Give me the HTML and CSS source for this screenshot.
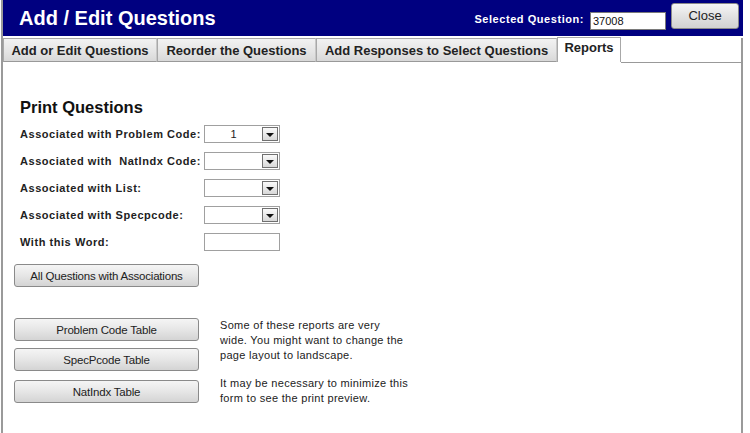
FILE: index.html
```html
<!DOCTYPE html>
<html>
<head>
<meta charset="utf-8">
<link rel="stylesheet" href="styles.css">
</head>
<body>
<div class="app">
  <header class="header">
    <h1 class="title">Add / Edit Questions</h1>
    <div class="selected">
      <span class="sel-label">Selected Question:</span>
      <span class="sel-input">37008</span>
      <span class="close-btn">Close</span>
    </div>
  </header>
  <nav class="tabs">
    <span class="tab t1">Add or Edit Questions</span>
    <span class="tab t2">Reorder the Questions</span>
    <span class="tab t3">Add Responses to Select Questions</span>
    <span class="tab active">Reports</span>
    <span class="tab-fill"></span>
  </nav>
  <main class="panel">
    <h2 class="section-title">Print Questions</h2>
    <div class="form">
      <div class="row">
        <span class="label">Associated with Problem Code:</span>
        <span class="combo"><span class="combo-val">1</span><span class="combo-btn"><span class="arrow"></span></span></span>
      </div>
      <div class="row">
        <span class="label">Associated with &nbsp;NatIndx Code:</span>
        <span class="combo"><span class="combo-val"></span><span class="combo-btn"><span class="arrow"></span></span></span>
      </div>
      <div class="row">
        <span class="label">Associated with List:</span>
        <span class="combo"><span class="combo-val"></span><span class="combo-btn"><span class="arrow"></span></span></span>
      </div>
      <div class="row">
        <span class="label">Associated with Specpcode:</span>
        <span class="combo"><span class="combo-val"></span><span class="combo-btn"><span class="arrow"></span></span></span>
      </div>
      <div class="row">
        <span class="label">With this Word:</span>
        <span class="textbox"></span>
      </div>
    </div>
    <div class="btn all-btn">All Questions with Associations</div>
    <div class="reports">
      <div class="btn-col">
        <div class="btn">Problem Code Table</div>
        <div class="btn b2">SpecPcode Table</div>
        <div class="btn b3">NatIndx Table</div>
      </div>
      <div class="notes">
        <p>Some of these reports are very<br>wide. You might want to change the<br>page layout to landscape.</p>
        <p>It may be necessary to minimize this<br>form to see the print preview.</p>
      </div>
    </div>
  </main>
</div>
</body>
</html>
```
FILE: styles.css
```css
* { box-sizing: border-box; }
html, body { margin: 0; padding: 0; background: #fff; }
body { font-family: "Liberation Sans", Arial, sans-serif; color: #222; }
.app {
  width: 742px;
  height: 433px;
  margin-left: 1px;
  border-left: 2px solid #9a9a9a;
  display: flex;
  flex-direction: column;
}
.header {
  height: 36px;
  background: #000080;
  display: flex;
  align-items: center;
  padding-left: 16px;
  flex: none;
}
.title {
  margin: 0;
  color: #fff;
  font-size: 20px;
  font-weight: bold;
}
.selected {
  margin-left: auto;
  display: flex;
  align-items: center;
}
.sel-label {
  color: #fff;
  font-size: 11px;
  font-weight: bold;
  letter-spacing: 0.55px;
  margin-right: 6px;
  margin-top: 2px;
}
.sel-input {
  width: 76px;
  height: 18px;
  background: #fff;
  border: 1px solid #7a7a7a;
  font-size: 11px;
  color: #111;
  padding: 2px 2px;
  line-height: 13px;
  margin-top: 6px;
}
.close-btn {
  width: 68px;
  height: 26px;
  margin-left: 5px;
  margin-right: 4px;
  margin-top: -4px;
  border: 1px solid #8a8a8a;
  border-radius: 3px;
  background: linear-gradient(#f6f6f6, #e2e2e2 50%, #d2d2d2);
  font-size: 13px;
  color: #222;
  display: flex;
  align-items: center;
  justify-content: center;
  padding-bottom: 2px;
}
.tabs {
  display: flex;
  margin-top: 2px;
  height: 25px;
  flex: none;
}
.tab {
  height: 24px;
  border: 1px solid #a8a8a8;
  border-right-color: #c8c8c8;
  background: linear-gradient(#f2f2f2, #e4e4e4 60%, #d8d8d8);
  font-size: 13px;
  font-weight: bold;
  color: #222;
  display: flex;
  align-items: center;
  justify-content: center;
  border-bottom: 1px solid #999;
}
.t1 { width: 154px; }
.t2 { width: 159px; }
.t3 { width: 241px; }
.tab.active {
  width: 64px;
  height: 25px;
  margin-top: -1px;
  background: #fff;
  border: 1px solid #a8a8a8;
  border-bottom: none;
  align-items: flex-start;
  padding-top: 2px;
}
.tab-fill {
  flex: 1;
  border-bottom: 1px solid #999;
  border-right: 2px solid #9a9a9a;
}
.panel {
  flex: 1;
  border-right: 2px solid #9a9a9a;
  padding-left: 17px;
  padding-top: 35px;
}
.section-title {
  margin: 0 0 3px 0;
  font-size: 16.5px;
  font-weight: bold;
  color: #111;
}
.form { display: flex; flex-direction: column; }
.row {
  display: flex;
  align-items: center;
  height: 27px;
}
.label {
  width: 184px;
  font-size: 11px;
  font-weight: bold;
  letter-spacing: 0.55px;
  color: #222;
}
.combo {
  width: 76px;
  height: 18px;
  border: 1px solid #a0a0a0;
  display: flex;
  background: #fff;
}
.combo-val {
  flex: 1;
  font-size: 11px;
  text-align: center;
  line-height: 16px;
  color: #222;
}
.combo-btn {
  width: 16px;
  height: 14px;
  margin: 1px 1px 0 0;
  border: 1px solid #707070;
  background: linear-gradient(#fafafa, #d8d8d8);
  display: flex;
  align-items: center;
  justify-content: center;
}
.arrow {
  width: 0;
  height: 0;
  border-left: 4px solid transparent;
  border-right: 4px solid transparent;
  border-top: 4px solid #111;
  margin-top: 3px;
}
.textbox {
  width: 76px;
  height: 18px;
  border: 1px solid #a0a0a0;
  background: #fff;
}
.btn {
  width: 185px;
  height: 23px;
  border: 1px solid #8a8a8a;
  border-radius: 3px;
  background: linear-gradient(#f5f5f5, #e6e6e6 50%, #d4d4d4);
  font-size: 11.5px;
  color: #222;
  display: flex;
  align-items: center;
  justify-content: center;
  letter-spacing: -0.2px;
}
.all-btn { margin-left: -6px; margin-top: 9px; }
.reports {
  display: flex;
  margin-left: -6px;
  margin-top: 31px;
}
.btn-col { display: flex; flex-direction: column; }
.b2 { margin-top: 7px; }
.b3 { margin-top: 9px; }
.notes {
  margin-left: 21px;
  margin-top: 0px;
  white-space: nowrap;
  font-size: 11px;
  letter-spacing: 0.3px;
  line-height: 15px;
  color: #222;
}
.notes p { margin: 0 0 13px 0; }
```
